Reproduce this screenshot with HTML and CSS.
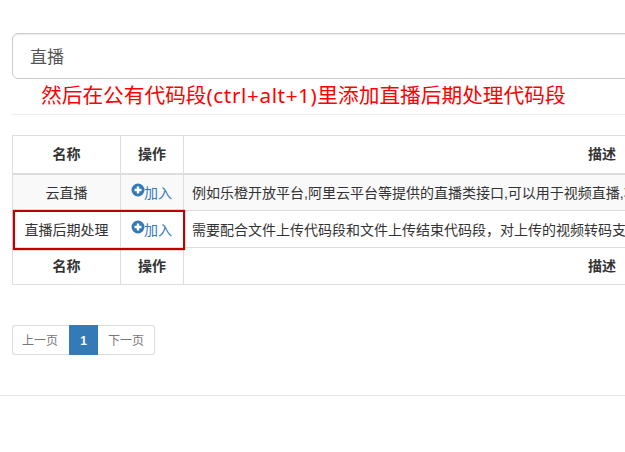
FILE: index.html
```html
<!DOCTYPE html>
<html lang="zh-CN">
<head>
    <meta charset="UTF-8">
    <title>代码段</title>
    <link rel="stylesheet" href="styles.css">
</head>
<body>

<div class="wrap">
    <input class="search" type="text" value="直播">
    <p class="note">然后在公有代码段<span class="keys">(ctrl+alt+1)</span>里添加直播后期处理代码段</p>
    <hr class="line-top">

    <div class="table-box">
        <table>
            <thead>
                <tr>
                    <th class="col-name">名称</th>
                    <th class="col-op">操作</th>
                    <th>描述</th>
                </tr>
            </thead>
            <tbody>
                <tr class="odd">
                    <td class="center">云直播</td>
                    <td class="op"><a href="#"><svg class="plus" viewBox="0 0 14 14"><circle cx="7" cy="7" r="6.5"/><path d="M3.5 7h7M7 3.5v7"/></svg>加入</a></td>
                    <td>例如乐橙开放平台,阿里云平台等提供的直播类接口,可以用于视频直播,将直播的视频流推送到平台后进行播放和回看等相关操作</td>
                </tr>
                <tr>
                    <td class="center">直播后期处理</td>
                    <td class="op"><a href="#"><svg class="plus" viewBox="0 0 14 14"><circle cx="7" cy="7" r="6.5"/><path d="M3.5 7h7M7 3.5v7"/></svg>加入</a></td>
                    <td>需要配合文件上传代码段和文件上传结束代码段，对上传的视频转码支持后再进行直播后期的相关处理操作和保存</td>
                </tr>
            </tbody>
            <tfoot>
                <tr>
                    <th>名称</th>
                    <th>操作</th>
                    <th>描述</th>
                </tr>
            </tfoot>
        </table>
        <div class="red-box"></div>
    </div>

    <ul class="pager">
        <li><a href="#">上一页</a></li>
        <li class="active"><a href="#">1</a></li>
        <li><a href="#">下一页</a></li>
    </ul>
</div>

<hr class="line-bottom">

</body>
</html>
```

FILE: styles.css
```css
html, body {
    margin: 0;
    height: 452px;
    overflow: hidden;
    background-color: #fff;
}
body {
    width: 625px;
    font-family: "Liberation Sans", "Noto Sans CJK SC", sans-serif;
    font-size: 14px;
    color: #333;
}
.wrap {
    width: 1009px;
    padding: 33px 0 0 12px;
}
.search {
    display: block;
    box-sizing: border-box;
    width: 100%;
    height: 46px;
    padding: 0 17px 2px;
    border: 1px solid #ccc;
    border-radius: 6px;
    box-shadow: inset 0 1px 1px rgba(0, 0, 0, .075);
    font-family: inherit;
    font-size: 17px;
    color: #555;
}
.note {
    margin: 2px 0 0;
    padding-left: 29px;
    font-family: "Noto Sans", "Noto Sans CJK SC", sans-serif;
    font-size: 20.7px;
    line-height: 28px;
    color: #f00;
}
.keys {
    letter-spacing: .6px;
}
.line-top {
    margin: 5px 0 20px;
    border: 0;
    border-top: 1px solid #eee;
}
.table-box {
    position: relative;
}
table {
    width: 100%;
    table-layout: fixed;
    border-collapse: collapse;
}
th, td {
    height: 37px;
    box-sizing: border-box;
    padding: 0 8px;
    border: 1px solid #ddd;
    line-height: 20px;
    white-space: nowrap;
    overflow: hidden;
}
td {
    padding-top: 2px;
}
th {
    text-align: center;
}
thead th {
    height: 38px;
    border-bottom-width: 2px;
}
.col-name {
    width: 108px;
}
.col-op {
    width: 63px;
}
.center {
    text-align: center;
}
.odd td {
    background-color: #f9f9f9;
}
.op a {
    color: #337ab7;
    text-decoration: none;
}
.op {
    padding-left: 10px;
    padding-right: 0;
}
.plus {
    width: 14px;
    height: 14px;
    margin-right: -1px;
    vertical-align: 1px;
}
.plus circle {
    fill: #337ab7;
}
.plus path {
    stroke: #fff;
    stroke-width: 2.4;
}
.red-box {
    position: absolute;
    left: 1px;
    top: 75px;
    width: 168px;
    height: 36px;
    border: 2px solid #c00000;
    box-shadow: 0 0 1px #c00000;
}
.pager {
    display: flex;
    margin: 40px 0 0;
    padding: 0;
    list-style: none;
    font-size: 12px;
}
.pager a {
    display: block;
    height: 28px;
    padding: 0 10px;
    border: 1px solid #ddd;
    border-left-width: 0;
    line-height: 30px;
    color: #777;
    text-decoration: none;
}
.pager li:first-child a {
    padding-left: 9px;
    padding-right: 11px;
    border-left-width: 1px;
    border-right-width: 0;
    border-radius: 3px 0 0 3px;
}
.pager li:last-child a {
    border-radius: 0 3px 3px 0;
}
.pager .active a {
    box-sizing: content-box;
    width: 29px;
    padding: 0;
    border-width: 1px 0;
    border-color: #337ab7;
    background-color: #337ab7;
    text-align: center;
    font-weight: bold;
    color: #fff;
}
.line-bottom {
    margin: 40px 0 0;
    border: 0;
    border-top: 1px solid #e5e5e5;
}
```
